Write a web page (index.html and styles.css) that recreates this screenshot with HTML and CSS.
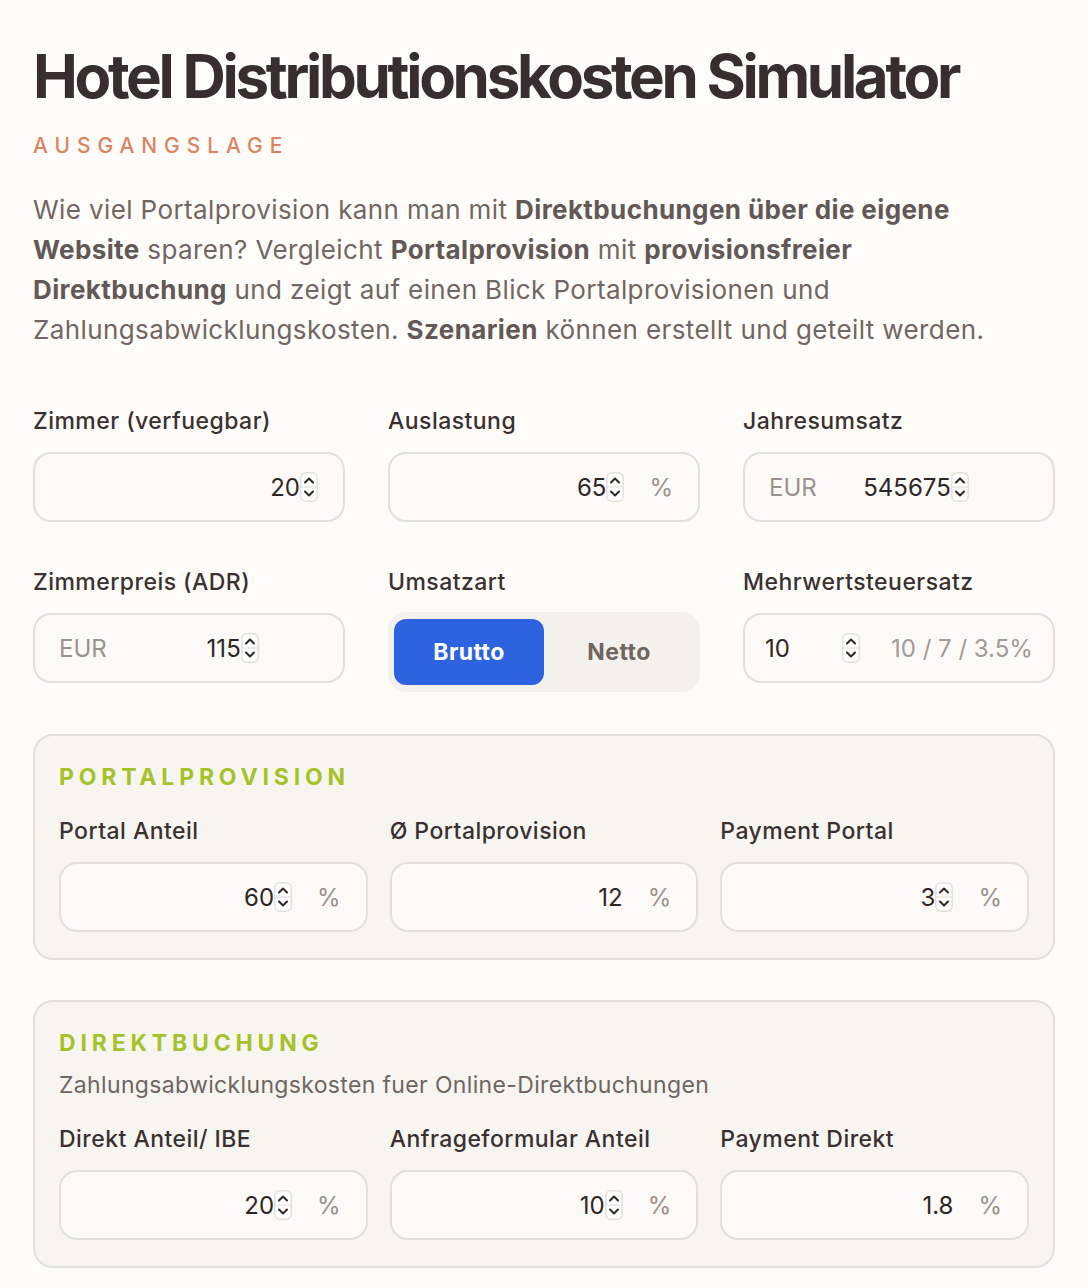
FILE: index.html
```html
<!DOCTYPE html>
<html lang="de">
<head>
  <meta charset="UTF-8">
  <title>Hotel Distributionskosten Simulator</title>
  <link rel="stylesheet" href="styles.css">
</head>
<body>
  <main class="page">
    <h1 class="title">Hotel Distributionskosten Simulator</h1>
    <div class="eyebrow">Ausgangslage</div>
    <p class="intro">
      Wie viel Portalprovision kann man mit <b>Direktbuchungen über die eigene Website</b> sparen? Vergleicht <b>Portalprovision</b> mit <b>provisionsfreier Direktbuchung</b> und zeigt auf einen Blick Portalprovisionen und Zahlungsabwicklungskosten. <b>Szenarien</b> können erstellt und geteilt werden.
    </p>

    <div class="grid">
      <div class="field">
        <label>Zimmer (verfuegbar)</label>
        <div class="control">
          <input class="num" type="text" value="20">
          <span class="spin"></span>
        </div>
      </div>
      <div class="field">
        <label>Auslastung</label>
        <div class="control">
          <input class="num" type="text" value="65">
          <span class="spin"></span>
          <span class="unit">%</span>
        </div>
      </div>
      <div class="field">
        <label>Jahresumsatz</label>
        <div class="control">
          <span class="prefix">EUR</span>
          <input class="num fixed" type="text" value="545675">
          <span class="spin"></span>
        </div>
      </div>

      <div class="field">
        <label>Zimmerpreis (ADR)</label>
        <div class="control">
          <span class="prefix">EUR</span>
          <input class="num fixed" type="text" value="115">
          <span class="spin"></span>
        </div>
      </div>
      <div class="field">
        <label>Umsatzart</label>
        <div class="toggle">
          <button class="active">Brutto</button>
          <button>Netto</button>
        </div>
      </div>
      <div class="field">
        <label>Mehrwertsteuersatz</label>
        <div class="control vat">
          <input class="num short" type="text" value="10">
          <span class="spin"></span>
          <span class="hint">10 / 7 / 3.5%</span>
        </div>
      </div>
    </div>

    <section class="panel">
      <h2 class="panel-title">Portalprovision</h2>
      <div class="grid tight">
        <div class="field">
          <label>Portal Anteil</label>
          <div class="control">
            <input class="num" type="text" value="60">
            <span class="spin"></span>
            <span class="unit">%</span>
          </div>
        </div>
        <div class="field">
          <label>Ø Portalprovision</label>
          <div class="control">
            <input class="num" type="text" value="12">
            <span class="unit">%</span>
          </div>
        </div>
        <div class="field">
          <label>Payment Portal</label>
          <div class="control">
            <input class="num" type="text" value="3">
            <span class="spin"></span>
            <span class="unit">%</span>
          </div>
        </div>
      </div>
    </section>

    <section class="panel">
      <h2 class="panel-title">Direktbuchung</h2>
      <p class="panel-sub">Zahlungsabwicklungskosten fuer Online-Direktbuchungen</p>
      <div class="grid tight">
        <div class="field">
          <label>Direkt Anteil/ IBE</label>
          <div class="control">
            <input class="num" type="text" value="20">
            <span class="spin"></span>
            <span class="unit">%</span>
          </div>
        </div>
        <div class="field">
          <label>Anfrageformular Anteil</label>
          <div class="control">
            <input class="num" type="text" value="10">
            <span class="spin"></span>
            <span class="unit">%</span>
          </div>
        </div>
        <div class="field">
          <label>Payment Direkt</label>
          <div class="control">
            <input class="num" type="text" value="1.8">
            <span class="unit">%</span>
          </div>
        </div>
      </div>
    </section>
  </main>

  <script>
    // kleine Pfeile wie beim nativen number-input
    const spinSvg = '<svg width="18" height="30" viewBox="0 0 18 30">' +
      '<rect x="0.75" y="0.75" width="16.5" height="28.5" rx="5" fill="#fff" stroke="#e4e0da" stroke-width="1.5"/>' +
      '<line x1="1" y1="15" x2="17" y2="15" stroke="#e4e0da" stroke-width="1.2"/>' +
      '<path d="M5 10.5 L9 6.5 L13 10.5" fill="none" stroke="#2f2727" stroke-width="2" stroke-linecap="round" stroke-linejoin="round"/>' +
      '<path d="M5 19.5 L9 23.5 L13 19.5" fill="none" stroke="#2f2727" stroke-width="2" stroke-linecap="round" stroke-linejoin="round"/>' +
      '</svg>';
    document.querySelectorAll('.spin').forEach(s => { s.innerHTML = spinSvg; });

    document.querySelectorAll('.toggle button').forEach(btn => {
      btn.addEventListener('click', () => {
        document.querySelectorAll('.toggle button').forEach(b => b.classList.remove('active'));
        btn.classList.add('active');
      });
    });
  </script>
</body>
</html>
```

FILE: styles.css
```css
* {
  margin: 0;
  padding: 0;
  box-sizing: border-box;
}

body {
  background: #fdfcf9;
  font-family: Inter, "Noto Sans", sans-serif;
  color: #3a3030;
}

.page {
  padding: 43px 33px 20px 33px;
}

.title {
  font-size: 60px;
  line-height: 66px;
  font-weight: 700;
  letter-spacing: -0.055em;
  color: #382e2e;
}

.eyebrow {
  margin-top: 25px;
  font-size: 21px;
  line-height: 24px;
  font-weight: 500;
  letter-spacing: 0.33em;
  text-transform: uppercase;
  color: #dc8462;
}

.intro {
  max-width: 1000px;
  margin-top: 32px;
  font-size: 26px;
  line-height: 40px;
  letter-spacing: 0.015em;
  color: #716661;
}

.intro b {
  font-weight: 700;
  color: #625855;
}

.grid {
  margin-top: 57px;
  display: grid;
  grid-template-columns: repeat(3, minmax(0, 1fr));
  column-gap: 43px;
  row-gap: 46px;
  align-items: start;
}

.grid.tight {
  margin-top: 0;
  column-gap: 22px;
}

.field label {
  display: block;
  font-size: 23px;
  line-height: 28px;
  font-weight: 500;
  letter-spacing: 0.02em;
  color: #3a3030;
  margin-bottom: 17px;
}

.control {
  display: flex;
  align-items: center;
  height: 70px;
  padding: 0 25px 0 24px;
  background: #fcfaf6;
  border: 2px solid #e4dfd8;
  border-radius: 18px;
}

.num {
  flex: 1;
  width: 0;
  min-width: 0;
  border: none;
  background: transparent;
  font-family: inherit;
  font-size: 24px;
  color: #2e2626;
  text-align: right;
  outline: none;
}

.num.fixed {
  flex: none;
  width: 100px;
  margin-left: 34px;
}

.num.short {
  flex: none;
  width: 77px;
  text-align: left;
}

.spin {
  display: flex;
  width: 18px;
  height: 30px;
}

.unit {
  margin-left: 25px;
  font-size: 24px;
  color: #9b918c;
}

.prefix {
  font-size: 24px;
  color: #9b918c;
}

.vat {
  padding-left: 20px;
}

.hint {
  margin-left: 31px;
  font-size: 24px;
  color: #a39a95;
  white-space: nowrap;
}

.toggle {
  display: flex;
  height: 80px;
  margin-top: -1px;
  padding: 7px 6px;
  background: #f4f1ec;
  border-radius: 18px;
}

.toggle button {
  flex: 1;
  border: none;
  border-radius: 12px;
  background: transparent;
  font-family: inherit;
  font-size: 23px;
  font-weight: 700;
  letter-spacing: 0.02em;
  color: #6f6561;
  cursor: pointer;
}

.toggle button.active {
  background: #2d63df;
  color: #fff;
}

.panel {
  margin-top: 42px;
  padding: 28px 24px 26px 24px;
  background: #f7f5f0;
  border: 2px solid #e4dfd8;
  border-radius: 20px;
}

.panel + .panel {
  margin-top: 40px;
}

.panel-title {
  font-size: 23px;
  line-height: 26px;
  font-weight: 700;
  letter-spacing: 0.21em;
  text-transform: uppercase;
  color: #a6c22b;
  margin-bottom: 27px;
}

.panel-sub {
  margin-top: -12px;
  margin-bottom: 26px;
  font-size: 23px;
  line-height: 28px;
  letter-spacing: 0.015em;
  color: #6f6561;
}
```
